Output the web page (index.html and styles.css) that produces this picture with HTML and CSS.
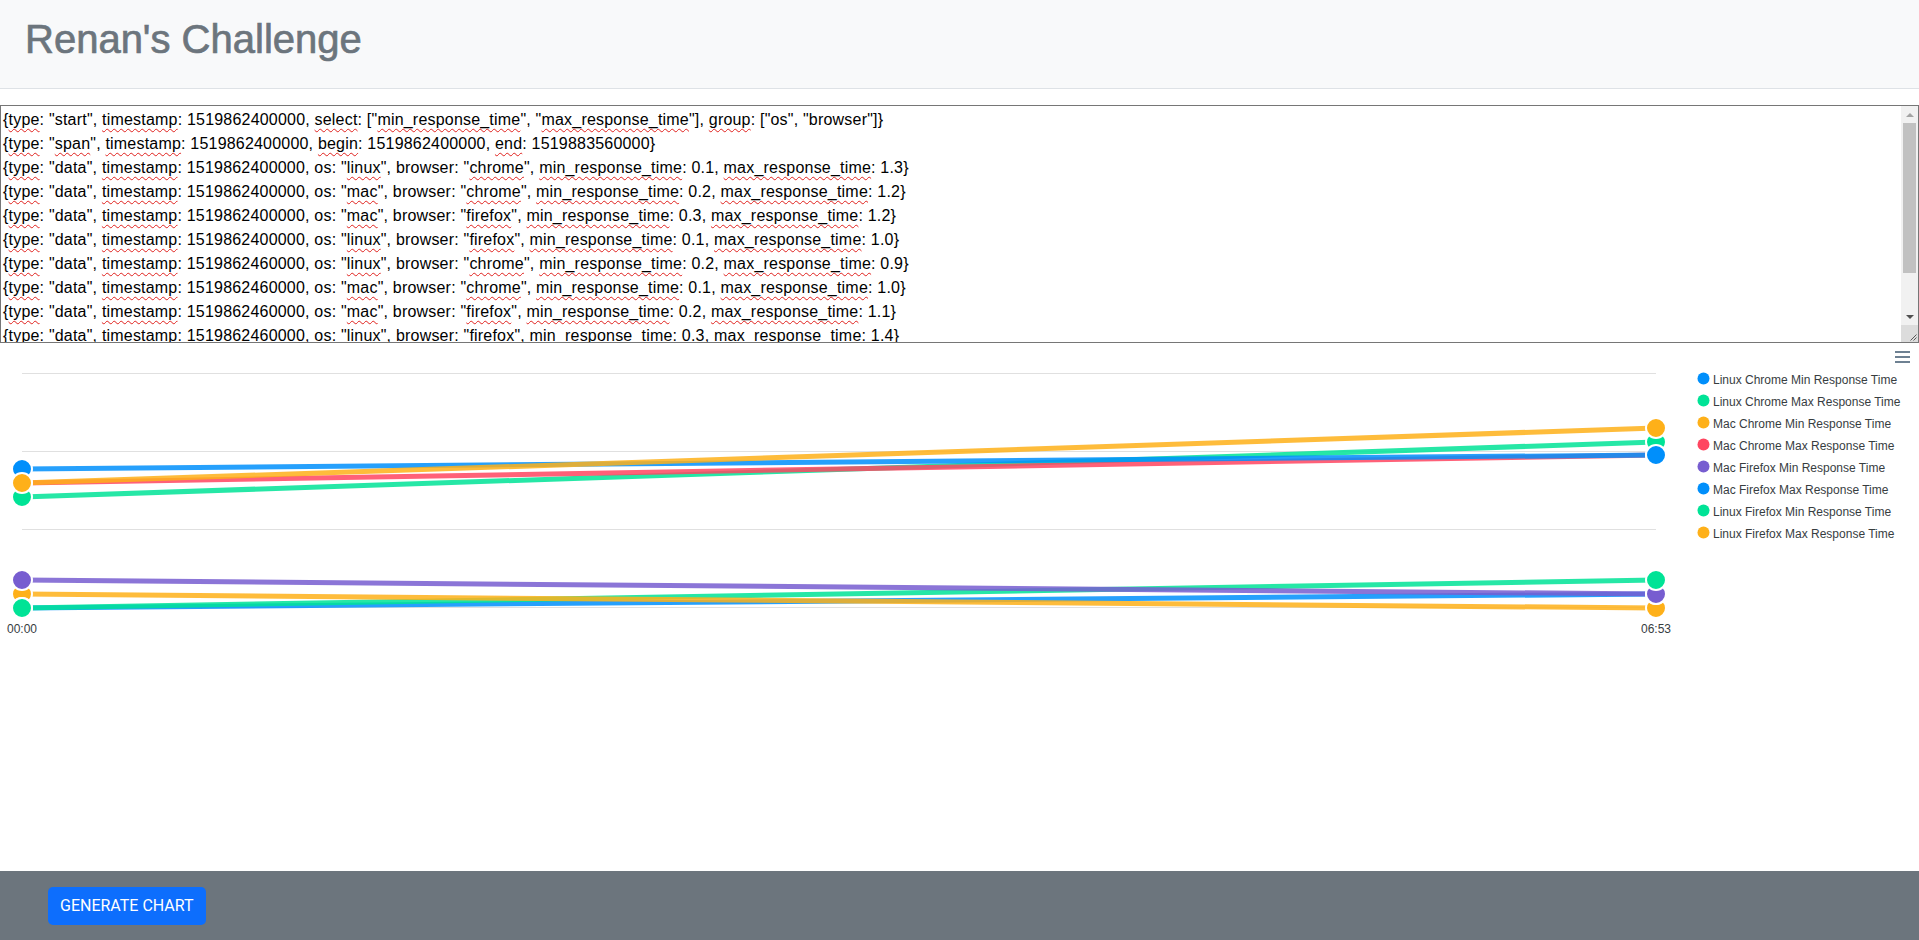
FILE: index.html
```html
<!DOCTYPE html>
<html lang="en">
<head>
<meta charset="utf-8">
<title>Renan's Challenge</title>
<link rel="stylesheet" href="styles.css">
</head>
<body>
<div class="app">
  <header class="topbar">
    <h1 class="title">Renan's Challenge</h1>
  </header>
  <main class="content">
    <div class="editor">
      <div class="editor-text" role="textbox" aria-multiline="true">
        <div class="ln">{<span class="sp">type</span>: "start", <span class="sp">timestamp</span>: 1519862400000, <span class="sp">select</span>: ["<span class="sp">min_response_time</span>", "<span class="sp">max_response_time</span>"], <span class="sp">group</span>: ["os", "browser"]}</div>
        <div class="ln">{<span class="sp">type</span>: "<span class="sp">span</span>", <span class="sp">timestamp</span>: 1519862400000, <span class="sp">begin</span>: 1519862400000, <span class="sp">end</span>: 1519883560000}</div>
        <div class="ln">{<span class="sp">type</span>: "data", <span class="sp">timestamp</span>: 1519862400000, os: "<span class="sp">linux</span>", browser: "<span class="sp">chrome</span>", <span class="sp">min_response_time</span>: 0.1, <span class="sp">max_response_time</span>: 1.3}</div>
        <div class="ln">{<span class="sp">type</span>: "data", <span class="sp">timestamp</span>: 1519862400000, os: "<span class="sp">mac</span>", browser: "<span class="sp">chrome</span>", <span class="sp">min_response_time</span>: 0.2, <span class="sp">max_response_time</span>: 1.2}</div>
        <div class="ln">{<span class="sp">type</span>: "data", <span class="sp">timestamp</span>: 1519862400000, os: "<span class="sp">mac</span>", browser: "<span class="sp">firefox</span>", <span class="sp">min_response_time</span>: 0.3, <span class="sp">max_response_time</span>: 1.2}</div>
        <div class="ln">{<span class="sp">type</span>: "data", <span class="sp">timestamp</span>: 1519862400000, os: "<span class="sp">linux</span>", browser: "<span class="sp">firefox</span>", <span class="sp">min_response_time</span>: 0.1, <span class="sp">max_response_time</span>: 1.0}</div>
        <div class="ln">{<span class="sp">type</span>: "data", <span class="sp">timestamp</span>: 1519862460000, os: "<span class="sp">linux</span>", browser: "<span class="sp">chrome</span>", <span class="sp">min_response_time</span>: 0.2, <span class="sp">max_response_time</span>: 0.9}</div>
        <div class="ln">{<span class="sp">type</span>: "data", <span class="sp">timestamp</span>: 1519862460000, os: "<span class="sp">mac</span>", browser: "<span class="sp">chrome</span>", <span class="sp">min_response_time</span>: 0.1, <span class="sp">max_response_time</span>: 1.0}</div>
        <div class="ln">{<span class="sp">type</span>: "data", <span class="sp">timestamp</span>: 1519862460000, os: "<span class="sp">mac</span>", browser: "<span class="sp">firefox</span>", <span class="sp">min_response_time</span>: 0.2, <span class="sp">max_response_time</span>: 1.1}</div>
        <div class="ln">{<span class="sp">type</span>: "data", <span class="sp">timestamp</span>: 1519862460000, os: "<span class="sp">linux</span>", browser: "<span class="sp">firefox</span>", <span class="sp">min_response_time</span>: 0.3, <span class="sp">max_response_time</span>: 1.4}</div>
      </div>
      <div class="scrollbar" aria-hidden="true">
        <div class="sb-btn sb-up"><span class="tri-up"></span></div>
        <div class="sb-track"><div class="sb-thumb"></div></div>
        <div class="sb-btn sb-down"><span class="tri-down"></span></div>
        <div class="sb-corner">
          <svg width="17" height="17" viewBox="0 0 17 17"><line x1="15.5" y1="9.5" x2="9.5" y2="15.5"/><line x1="15.5" y1="12.5" x2="12.5" y2="15.5"/></svg>
        </div>
      </div>
    </div>
    <section class="chart">
      <svg class="plot" width="1919" height="528" viewBox="0 0 1919 528" xmlns="http://www.w3.org/2000/svg">
        <g class="grid">
          <line x1="22" y1="30.5" x2="1656" y2="30.5"/>
          <line x1="22" y1="108.5" x2="1656" y2="108.5"/>
          <line x1="22" y1="186.5" x2="1656" y2="186.5"/>
          <line x1="22" y1="264.5" x2="1656" y2="264.5"/>
        </g>
        <g class="lines">
          <line class="s-green" x1="22" y1="154" x2="1656" y2="99"/>
          <line class="s-red" x1="22" y1="140" x2="1656" y2="112"/>
          <line class="s-blue" x1="22" y1="126" x2="1656" y2="112"/>
          <line class="s-orange" x1="22" y1="140" x2="1656" y2="85"/>
          <line class="s-blue" x1="22" y1="265" x2="1656" y2="251"/>
          <line class="s-green" x1="22" y1="265" x2="1656" y2="237"/>
          <line class="s-orange" x1="22" y1="251" x2="1656" y2="265"/>
          <line class="s-purple" x1="22" y1="237" x2="1656" y2="251"/>
        </g>
        <g class="markers">
          <circle class="m-red" cx="22" cy="140" r="10"/>
          <circle class="m-green" cx="22" cy="154" r="10"/>
          <circle class="m-blue" cx="22" cy="126" r="10"/>
          <circle class="m-orange" cx="22" cy="140" r="10"/>
          <circle class="m-red" cx="1656" cy="112" r="10"/>
          <circle class="m-green" cx="1656" cy="99" r="10"/>
          <circle class="m-blue" cx="1656" cy="112" r="10"/>
          <circle class="m-orange" cx="1656" cy="85" r="10"/>
          <circle class="m-orange" cx="22" cy="251" r="10"/>
          <circle class="m-blue" cx="22" cy="265" r="10"/>
          <circle class="m-purple" cx="22" cy="237" r="10"/>
          <circle class="m-green" cx="22" cy="265" r="10"/>
          <circle class="m-orange" cx="1656" cy="265" r="10"/>
          <circle class="m-blue" cx="1656" cy="251" r="10"/>
          <circle class="m-purple" cx="1656" cy="251" r="10"/>
          <circle class="m-green" cx="1656" cy="237" r="10"/>
        </g>
        <g class="xaxis">
          <text x="22" y="290">00:00</text>
          <text x="1656" y="290">06:53</text>
        </g>
        <g class="legend">
          <circle class="l-blue" cx="1703.5" cy="35.5" r="6"/>
          <text x="1713" y="41">Linux Chrome Min Response Time</text>
          <circle class="l-green" cx="1703.5" cy="57.5" r="6"/>
          <text x="1713" y="63">Linux Chrome Max Response Time</text>
          <circle class="l-orange" cx="1703.5" cy="79.5" r="6"/>
          <text x="1713" y="85">Mac Chrome Min Response Time</text>
          <circle class="l-red" cx="1703.5" cy="101.5" r="6"/>
          <text x="1713" y="107">Mac Chrome Max Response Time</text>
          <circle class="l-purple" cx="1703.5" cy="123.5" r="6"/>
          <text x="1713" y="129">Mac Firefox Min Response Time</text>
          <circle class="l-blue" cx="1703.5" cy="145.5" r="6"/>
          <text x="1713" y="151">Mac Firefox Max Response Time</text>
          <circle class="l-green" cx="1703.5" cy="167.5" r="6"/>
          <text x="1713" y="173">Linux Firefox Min Response Time</text>
          <circle class="l-orange" cx="1703.5" cy="189.5" r="6"/>
          <text x="1713" y="195">Linux Firefox Max Response Time</text>
        </g>
        <g class="menu">
          <line x1="1895" y1="9" x2="1910" y2="9"/>
          <line x1="1895" y1="14" x2="1910" y2="14"/>
          <line x1="1895" y1="19" x2="1910" y2="19"/>
        </g>
      </svg>
    </section>
  </main>
  <footer class="bottombar">
    <button class="btn" type="button">GENERATE CHART</button>
  </footer>
</div>
</body>
</html>
```
FILE: styles.css
```css
html, body {
  margin: 0;
  padding: 0;
}
body {
  font-family: "Liberation Sans", Arial, sans-serif;
  color: #212529;
  background: #fff;
}
.app {
  display: flex;
  flex-direction: column;
  height: 100vh;
  overflow: hidden;
}
.topbar {
  background: #f8f9fa;
  border-bottom: 1px solid #dee2e6;
  padding: 15px 25px 25px;
  flex: 0 0 auto;
}
.title {
  margin: 0;
  font-family: "Liberation Sans", Arial, sans-serif;
  font-size: 40px;
  line-height: 48px;
  font-weight: 400;
  color: #6c757d;
  -webkit-text-stroke: 0.7px #6c757d;
}
.content {
  flex: 1 1 auto;
  display: flex;
  flex-direction: column;
  padding-top: 16px;
  min-height: 0;
}
.editor {
  box-sizing: border-box;
  height: 238px;
  flex: 0 0 auto;
  border: 1px solid #767676;
  display: flex;
  background: #fff;
}
.editor-text {
  flex: 1 1 auto;
  min-width: 0;
  overflow: hidden;
  padding: 2px;
  font-family: "Liberation Sans", Arial, sans-serif;
  font-size: 16px;
  line-height: 24px;
  letter-spacing: 0.2px;
  color: #000;
}
.ln {
  white-space: nowrap;
}
.sp {
  text-decoration-line: underline;
  text-decoration-style: wavy;
  text-decoration-color: #e0211d;
  text-decoration-thickness: 1px;
  text-underline-offset: 3px;
}
.scrollbar {
  flex: 0 0 17px;
  width: 17px;
  display: flex;
  flex-direction: column;
  background: #f1f1f1;
}
.sb-btn {
  flex: 0 0 17px;
  height: 17px;
  display: flex;
  align-items: center;
  justify-content: center;
}
.tri-up {
  width: 0;
  height: 0;
  border-left: 4px solid transparent;
  border-right: 4px solid transparent;
  border-bottom: 4px solid #a3a3a3;
}
.tri-down {
  width: 0;
  height: 0;
  border-left: 4px solid transparent;
  border-right: 4px solid transparent;
  border-top: 4px solid #505050;
}
.sb-track {
  flex: 1 1 auto;
  padding: 0 2px;
}
.sb-thumb {
  height: 150px;
  background: #c1c1c1;
}
.sb-corner {
  flex: 0 0 17px;
  height: 17px;
  background: #dcdcdc;
}
.sb-corner svg {
  display: block;
}
.sb-corner line {
  stroke: #5a5a5a;
  stroke-width: 1;
}
.chart {
  flex: 1 1 auto;
  min-height: 0;
  position: relative;
}
.plot {
  display: block;
  font-family: "Liberation Sans", Arial, sans-serif;
}
.grid line {
  stroke: #e0e0e0;
  stroke-width: 1;
}
.lines line {
  stroke-width: 5;
  stroke-opacity: 0.85;
}
.s-blue { stroke: #008ffb; }
.s-green { stroke: #00e396; }
.s-orange { stroke: #feb019; }
.s-red { stroke: #ff4560; }
.s-purple { stroke: #775dd0; }
.markers circle {
  stroke: #fff;
  stroke-width: 2;
}
.m-blue, .l-blue { fill: #008ffb; }
.m-green, .l-green { fill: #00e396; }
.m-orange, .l-orange { fill: #feb019; }
.m-red, .l-red { fill: #ff4560; }
.m-purple, .l-purple { fill: #775dd0; }
.xaxis text {
  font-size: 12px;
  fill: #373d3f;
  text-anchor: middle;
}
.legend text {
  font-size: 12px;
  fill: #373d3f;
}
.menu line {
  stroke: #6e8192;
  stroke-width: 2;
}
.bottombar {
  flex: 0 0 69px;
  box-sizing: border-box;
  background: #6c757d;
  padding: 16px 48px 15px;
}
.btn {
  display: inline-block;
  font-family: Roboto, "Liberation Sans", sans-serif;
  font-size: 16px;
  line-height: 24px;
  height: 38px;
  padding: 6px 12px;
  color: #fff;
  background: #0d6efd;
  border: 0;
  border-radius: 5px;
  cursor: pointer;
}
```
